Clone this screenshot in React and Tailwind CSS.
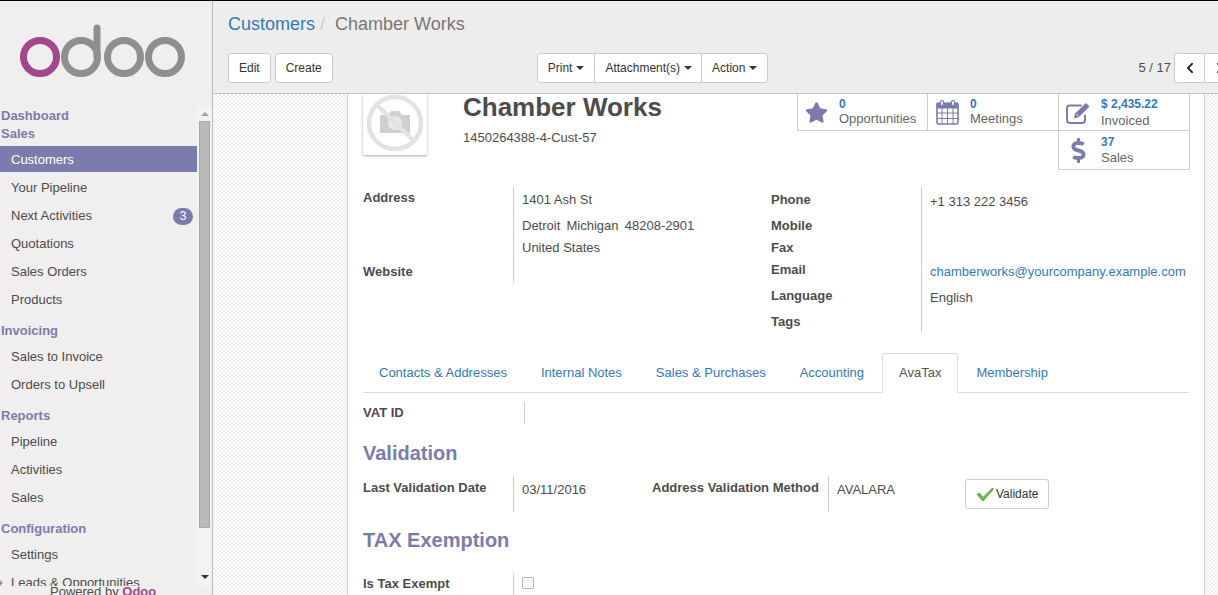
import { FaStar, FaDollarSign, FaChevronLeft, FaChevronRight } from 'react-icons/fa';

const MENU = [
  { title: 'Sales', items: ['Customers', 'Your Pipeline', 'Next Activities', 'Quotations', 'Sales Orders', 'Products'] },
  { title: 'Invoicing', items: ['Sales to Invoice', 'Orders to Upsell'] },
  { title: 'Reports', items: ['Pipeline', 'Activities', 'Sales'] },
  { title: 'Configuration', items: ['Settings', 'Leads & Opportunities'] },
];

const TABS = ['Contacts & Addresses', 'Internal Notes', 'Sales & Purchases', 'Accounting', 'AvaTax', 'Membership'];

function Logo() {
  return (
    <svg width="212" height="106" viewBox="0 1 212 106" className="block shrink-0">
      <circle cx="40" cy="57" r="16.500" fill="none" stroke="#a2478c" strokeWidth="7" />
      <circle cx="81" cy="57" r="16.500" fill="none" stroke="#8f8f8f" strokeWidth="7" />
      <path d="M97 28V57" stroke="#8f8f8f" strokeWidth="7" strokeLinecap="round" />
      <circle cx="124" cy="57" r="16.500" fill="none" stroke="#8f8f8f" strokeWidth="7" />
      <circle cx="165" cy="57" r="16.500" fill="none" stroke="#8f8f8f" strokeWidth="7" />
    </svg>
  );
}

function CalendarIcon() {
  return (
    <svg width="23" height="25" viewBox="0 0 23 25" fill="none" stroke="#7c7bad" className="block ml-px">
      <rect x="1" y="3.500" width="21" height="20.500" rx="1.500" strokeWidth="1.600" />
      <rect x="1" y="3" width="21" height="5" fill="#7c7bad" />
      <rect x="4.500" y="0.500" width="3" height="5" rx="1.500" fill="#fff" strokeWidth="1.200" />
      <rect x="15.500" y="0.500" width="3" height="5" rx="1.500" fill="#fff" strokeWidth="1.200" />
      <path d="M6 8v16M11.500 8v16M17 8v16M1 13h21M1 18.500h21" strokeWidth="1" />
    </svg>
  );
}

function EditIcon() {
  return (
    <svg width="25" height="23" viewBox="0 0 25 23" fill="none" className="block">
      <path d="M19 13.500V18a3 3 0 0 1-3 3H4a3 3 0 0 1-3-3V6.500a3 3 0 0 1 3-3h11" stroke="#7c7bad" strokeWidth="2" strokeLinecap="round" />
      <path d="M8 16.500l1-5L20 1l3.500 3.500L13 15z" fill="#7c7bad" />
      <path d="M10.500 12l2 2" stroke="#fff" strokeWidth="0.800" />
    </svg>
  );
}

function NoImage() {
  return (
    <svg width="64" height="64" viewBox="0 0 64 64" className="block">
      <path d="M17 42V24h8l3-4h8l3 4h8v18z" fill="#cfcfcf" />
      <circle cx="32" cy="32" r="7" fill="#e8e8e8" />
      <circle cx="32" cy="32" r="26" fill="none" stroke="#e3e3e3" strokeWidth="4.500" />
      <path d="M14 14L52 51" stroke="#e3e3e3" strokeWidth="4.500" />
    </svg>
  );
}

function Sidebar() {
  return (
    <div className="w-[213px] shrink-0 flex flex-col bg-[#f0eeee] border-r border-[#b9b9c4] overflow-hidden">
      <Logo />
      <div className="flex h-[479px] shrink-0 overflow-hidden">
        <div className="w-[197px] shrink-0">
          <div className="h-[18px] pl-px text-[13px] leading-[18px] font-bold text-[#7c7bad]">Dashboard</div>
          {MENU.map(group => (
            <div key={group.title} className="mb-[9px]">
              <div className="h-[18px] pl-px text-[13px] leading-[18px] font-bold text-[#7c7bad]">{group.title}</div>
              <div className="mt-1">
                {group.items.map(item => (
                  <div key={item}
                    className={`flex items-center justify-between h-[26px] pl-[11px] pr-1 text-[13px] ${
                      item === 'Customers' ? '-mt-px mb-[3px] pt-px bg-[#7c7bad] text-white' : 'mb-[2px] text-[#4c4c4c]'
                    }`}>
                    <span className="flex items-center">
                      {item === 'Leads & Opportunities' && (
                        <span className="w-0 h-0 -ml-[11px] mr-2 border-y-[3px] border-y-transparent border-l-[3px] border-l-[#999]" />
                      )}
                      {item}
                    </span>
                    {item === 'Next Activities' && (
                      <span className="flex items-center justify-center w-5 h-[17px] rounded-full bg-[#7c7bad] text-white text-xs">3</span>
                    )}
                  </div>
                ))}
              </div>
            </div>
          ))}
        </div>
        <div className="w-[15px] shrink-0 flex flex-col items-center bg-[#f4f3f3]">
          <div className="h-[14px] shrink-0 flex items-center justify-center">
            <div className="w-0 h-0 border-x-[4px] border-x-transparent border-b-[4px] border-b-[#a3a3a3]" />
          </div>
          <div className="w-[11px] h-[407px] shrink-0 bg-[#bababa] border border-[#a8a8a8]" />
          <div className="mt-[41px] h-[15px] shrink-0 flex items-center justify-center">
            <div className="w-0 h-0 border-x-[4px] border-x-transparent border-t-[4px] border-t-[#333]" />
          </div>
        </div>
      </div>
      <div className="h-[9px] shrink-0 pl-[50px] text-[13px] leading-[12px] text-[#4c4c4c] whitespace-nowrap">
        Powered by <span className="font-bold text-[#a24689]">Odoo</span>
      </div>
    </div>
  );
}

function ToolButton({ children, className = '' }) {
  return (
    <div className={`flex items-center h-[30px] pl-[10px] bg-white border border-[#cccccc] text-xs text-[#333] ${className}`}>
      {children}
    </div>
  );
}

function Caret() {
  return <span className="ml-1 w-0 h-0 border-x-[4px] border-x-transparent border-t-[4px] border-t-[#333]" />;
}

function Header() {
  return (
    <div className="h-[93px] shrink-0 bg-[#eeeded] border-b border-[#c4c4c4] pl-[15px] pr-0">
      <div className="h-[52px] pt-[10px] text-lg leading-[26px]">
        <span className="text-[#337ab7]">Customers</span>
        <span className="text-[#cccccc] ml-[5px]">/</span>
        <span className="text-[#777777] ml-[10px]">Chamber Works</span>
      </div>
      <div className="flex items-center">
        <ToolButton className="rounded-[3px] pr-[10px]">Edit</ToolButton>
        <ToolButton className="rounded-[3px] ml-1 pr-[10px]">Create</ToolButton>
        <div className="flex ml-[204px]">
          <ToolButton className="rounded-l-[3px] pr-[10px]">Print<Caret /></ToolButton>
          <ToolButton className="-ml-px pr-[9px]">Attachment(s)<Caret /></ToolButton>
          <ToolButton className="-ml-px rounded-r-[3px] pr-[10px]">Action<Caret /></ToolButton>
        </div>
        <span className="ml-[370px] text-[13px] text-[#4c4c4c] whitespace-nowrap">5 / 17</span>
        <div className="flex ml-[3px] shrink-0">
          <div className="flex items-center justify-center w-[31px] h-[30px] bg-white border border-[#cccccc] rounded-l-[3px] text-xs text-[#222]"><FaChevronLeft /></div>
          <div className="flex items-center justify-center w-[31px] h-[30px] -ml-px bg-white border border-[#cccccc] text-xs text-[#222]"><FaChevronRight /></div>
        </div>
      </div>
    </div>
  );
}

function Stat({ icon, value, label, iconWidth = 'w-[42px]', gap = 'leading-[17px]', className = '' }) {
  return (
    <div className={`flex items-center border-[#cccccc] ${className}`}>
      <div className={`${iconWidth} pl-[7px] shrink-0 flex justify-start`}>{icon}</div>
      <div className="leading-none">
        <div className="text-xs font-bold text-[#337ab7] leading-[14px]">{value}</div>
        <div className={`text-[13px] text-[#666] ${gap}`}>{label}</div>
      </div>
    </div>
  );
}

function Label({ children, className = '' }) {
  return <div className={`text-[13px] font-bold text-[#4c4c4c] leading-[18px] ${className}`}>{children}</div>;
}

function Value({ children, className = '' }) {
  return <div className={`text-[13px] text-[#4c4c4c] leading-[18px] ${className}`}>{children}</div>;
}

function Sheet() {
  return (
    <div className="ml-[134px] w-[858px] h-[502px] shrink-0 bg-white border-x border-x-[#d4d4dc] pl-[15px] pr-[15px] overflow-hidden">
      <div className="flex h-[93px]">
        <div className="w-[64px] h-[61px] shrink-0 bg-white shadow-[0_1px_3px_rgba(0,0,0,0.35)] rounded-b-[2px] overflow-hidden">
          <div className="-mt-[3px]"><NoImage /></div>
        </div>
        <div className="ml-[36px] w-[334px] shrink-0">
          <div className="-mt-px text-[26px] leading-[28px] font-bold text-[#4c4c4c]">Chamber Works</div>
          <div className="mt-2 text-[13px] leading-[18px] text-[#4c4c4c]">1450264388-4-Cust-57</div>
        </div>
        <div className="w-[393px] shrink-0 grid grid-cols-[130px_131px_132px] grid-rows-[37px_39px] h-[76px]">
          <Stat className="border-l border-b" iconWidth="w-[41px]" gap="leading-[16px]" icon={<FaStar size={23} color="#7c7bad" />} value="0" label="Opportunities" />
          <Stat className="border-l border-b" gap="leading-[16px]" icon={<CalendarIcon />} value="0" label="Meetings" />
          <Stat className="border-x border-b pt-[2px]" gap="leading-[19px]" icon={<EditIcon />} value="$ 2,435.22" label="Invoiced" />
          <Stat className="col-start-3 border-x border-b" icon={<FaDollarSign size={25} color="#7c7bad" />} value="37" label="Sales" />
        </div>
      </div>

      <div className="flex h-[166px]">
        <div className="w-[150px] shrink-0 pt-[2px]">
          <Label>Address</Label>
          <Label className="mt-[56px]">Website</Label>
        </div>
        <div className="w-[258px] shrink-0 h-[96px] border-l border-[#cccccc] pl-2 pt-1">
          <Value>1401 Ash St</Value>
          <Value className="mt-2 whitespace-pre [word-spacing:-0.5px]">Detroit  Michigan  48208-2901</Value>
          <Value className="mt-[4px]">United States</Value>
        </div>
        <div className="w-[150px] shrink-0 pt-1">
          <Label>Phone</Label>
          <Label className="mt-2">Mobile</Label>
          <Label className="mt-1">Fax</Label>
          <Label className="mt-1">Email</Label>
          <Label className="mt-2">Language</Label>
          <Label className="mt-2">Tags</Label>
        </div>
        <div className="flex-1 h-[145px] border-l border-[#cccccc] pl-2 pt-[6px]">
          <Value>+1 313 222 3456</Value>
          <Value className="mt-[52px] text-[#337ab7]">chamberworks@yourcompany.example.com</Value>
          <Value className="mt-2">English</Value>
        </div>
      </div>

      <div className="flex h-[41px] pt-px border-b border-[#dddddd] -mt-px">
        {TABS.map(tab => (
          <div key={tab}
            className={`mr-[2px] px-4 flex items-center text-[13px] ${
              tab === 'AvaTax'
                ? 'h-[40px] bg-white text-[#555] border border-[#dddddd] border-b-white rounded-t-[3px]'
                : 'h-[39px] text-[#337ab7]'
            }`}>
            {tab}
          </div>
        ))}
      </div>

      <div className="flex mt-[9px] h-[22px]">
        <Label className="w-[161px] shrink-0 pt-[2px]">VAT ID</Label>
        <div className="border-l border-[#cccccc]" />
      </div>

      <div className="mt-[15px] text-xl leading-[28px] font-bold text-[#7c7bad]">Validation</div>

      <div className="flex mt-[9px] h-[36px]">
        <Label className="w-[150px] shrink-0 pt-[3px]">Last Validation Date</Label>
        <div className="w-[139px] shrink-0 border-l border-[#cccccc] pl-2 pt-[5px]"><Value>03/11/2016</Value></div>
        <Label className="w-[176px] shrink-0 pt-[3px]">Address Validation Method</Label>
        <div className="w-[137px] shrink-0 border-l border-[#cccccc] pl-2 pt-[5px]"><Value>AVALARA</Value></div>
        <div className="flex items-center h-[30px] mt-[3px] px-[10px] bg-white border border-[#cccccc] rounded-[3px] text-xs text-[#333]">
          <svg width="18" height="15" viewBox="0 0 18 15" className="mr-[2px]">
            <path d="M1 7.500L3.500 6L7 10.500L16.500 1L17.500 2L7 14z" fill="#6cc04a" stroke="#3f9a2c" strokeWidth="0.800" />
          </svg>
          Validate
        </div>
      </div>

      <div className="mt-[14px] text-xl leading-[28px] font-bold text-[#7c7bad]">TAX Exemption</div>

      <div className="flex mt-[19px] h-[22px]">
        <Label className="w-[150px] shrink-0 pt-[2px]">Is Tax Exempt</Label>
        <div className="border-l border-[#cccccc] pl-2 pt-1">
          <div className="w-[12px] h-[12px] bg-[#f6f6f6] border border-[#b5b5b5] rounded-[2px]" />
        </div>
      </div>
    </div>
  );
}

export default function App() {
  return (
    <div className="w-[1218px] h-[595px] overflow-hidden bg-black pt-px flex font-['Liberation_Sans',Arial,sans-serif]">
      <Sidebar />
      <div className="flex-1 min-w-0 flex flex-col overflow-hidden bg-white">
        <Header />
        <div className="flex-1 flex overflow-hidden bg-[repeating-conic-gradient(#eeeeee_0_25%,#ffffff_0_50%)] bg-[length:4px_4px]">
          <Sheet />
        </div>
      </div>
    </div>
  );
}
